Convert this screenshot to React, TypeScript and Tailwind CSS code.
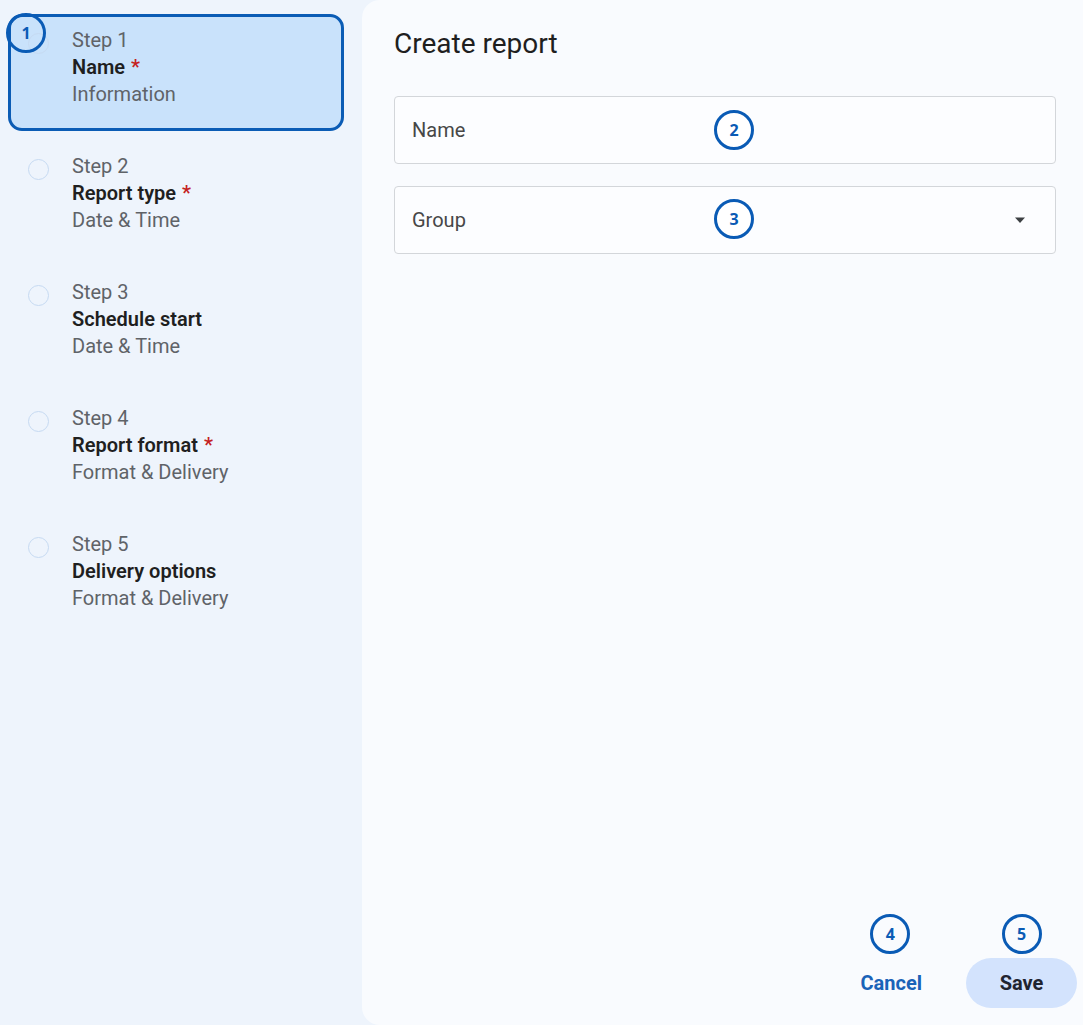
import React from "react";

type Step = { n: number; title: string; required: boolean; sub: string };

const steps: Step[] = [
  { n: 1, title: "Name", required: true, sub: "Information" },
  { n: 2, title: "Report type", required: true, sub: "Date & Time" },
  { n: 3, title: "Schedule start", required: false, sub: "Date & Time" },
  { n: 4, title: "Report format", required: true, sub: "Format & Delivery" },
  { n: 5, title: "Delivery options", required: false, sub: "Format & Delivery" },
];

// numbered callout ring drawn over the UI
function Marker({ n, className }: { n: number; className: string }) {
  return (
    <span
      className={
        "absolute flex h-[40px] w-[40px] items-center justify-center rounded-full border-[3px] border-[#0a5bb5] text-[16px] font-bold text-[#0a5bb5] [font-family:'Open_Sans',sans-serif] " +
        className
      }
    >
      {n}
    </span>
  );
}

function StepItem({ step, active }: { step: Step; active: boolean }) {
  return (
    <div
      className={
        "relative flex h-[117px] gap-[23px] rounded-[14px] pl-[17px] pt-[10px] " +
        (active ? "border-[3px] border-[#0b5cb5] bg-[#c9e2fb]" : "border-[3px] border-transparent")
      }
    >
      <div className="mt-[6px] h-[21px] w-[21px] shrink-0 rounded-full border-[1.5px] border-[#c6daf2]" />
      <div className="flex flex-col text-[20px] leading-[27px]">
        <span className="text-[#5f6368]">Step {step.n}</span>
        <span className="font-semibold text-[#1f1f1f]">
          {step.title}
          {step.required && <span className="ml-[6px] text-[#c5221f]">*</span>}
        </span>
        <span className="text-[#5f6368]">{step.sub}</span>
      </div>
      {active && <Marker n={1} className="-left-[5px] -top-[4px] bg-transparent" />}
    </div>
  );
}

export default function App() {
  return (
    <div className="flex h-[1025px] w-[1083px] overflow-hidden bg-[#eef4fc] [font-family:Roboto,'Liberation_Sans',sans-serif]">
      {/* stepper */}
      <aside className="flex w-[362px] shrink-0 flex-col gap-[9px] pl-[8px] pr-[18px] pt-[14px]">
        {steps.map((s) => (
          <StepItem key={s.n} step={s} active={s.n === 1} />
        ))}
      </aside>

      {/* form */}
      <main className="flex flex-1 flex-col rounded-l-[18px] bg-[#f9fbfe] pl-[32px] pr-[27px]">
        <h1 className="mt-[26px] text-[28px] leading-[36px] text-[#1f1f1f]">Create report</h1>

        <div className="relative mt-[34px] flex h-[68px] items-center rounded-[4px] border border-[#d3d6da] bg-[#fcfdff] px-[17px]">
          <span className="text-[20px] text-[#474747]">Name</span>
          <Marker n={2} className="left-[319px] top-[13px] bg-white" />
        </div>

        <div className="relative mt-[22px] flex h-[68px] items-center justify-between rounded-[4px] border border-[#d3d6da] bg-[#fcfdff] px-[17px]">
          <span className="text-[20px] text-[#474747]">Group</span>
          <svg width="12" height="7" viewBox="0 0 12 7" className="mr-[12px]">
            <path d="M1 0.5h10L6 6z" fill="#3c4043" />
          </svg>
          <Marker n={3} className="left-[319px] top-[12px] bg-white" />
        </div>

        <div className="flex-1" />

        <div className="mb-[17px] flex items-center justify-end gap-[40px]">
          <div className="relative">
            <button className="h-[50px] pl-[2px] pr-[4px] text-[20px] font-bold text-[#1a63b8]">Cancel</button>
            <Marker n={4} className="left-1/2 -top-[44px] -translate-x-[22px] bg-transparent" />
          </div>
          <div className="relative -mr-[21px]">
            <button className="h-[50px] w-[111px] rounded-full bg-[#d3e3fd] text-[20px] font-bold text-[#1f2430]">
              Save
            </button>
            <Marker n={5} className="left-1/2 -top-[44px] -translate-x-1/2 bg-transparent" />
          </div>
        </div>
      </main>
    </div>
  );
}
